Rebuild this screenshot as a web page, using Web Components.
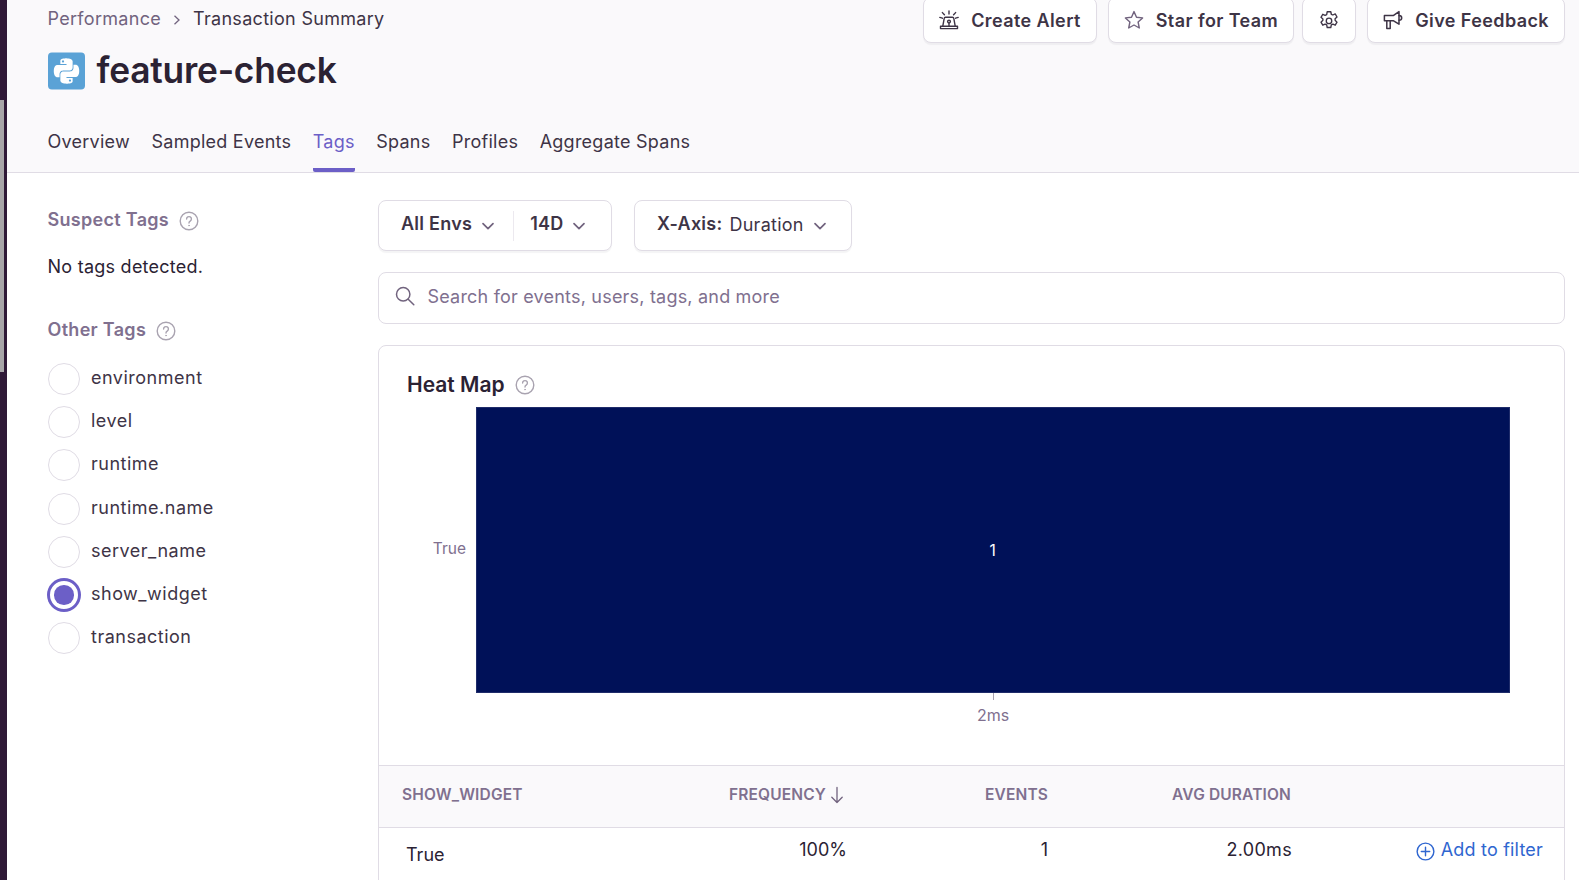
<!DOCTYPE html>
<html><head><meta charset="utf-8"><title>feature-check</title>
<style>
html,body{margin:0;padding:0;height:880px;overflow:hidden;background:#fff;font-family:Inter,"Liberation Sans",sans-serif;color:#2b2233}
</style></head><body>
<app-shell>
  <page-header slot="header"></page-header>
  <tag-sidebar slot="side"></tag-sidebar>
  <tag-main slot="main"></tag-main>
</app-shell>
<script>
const I={
 help:'<svg viewBox="0 0 20 20" fill="none" stroke="#a9a3b0" stroke-width="1.4" stroke-linecap="round"><circle cx="10" cy="10" r="8.8"/><path d="M7.6 8a2.4 2.4 0 1 1 3.6 2.1c-.8.5-1.2.9-1.2 1.9"/><circle cx="10" cy="14.6" r=".5" fill="#a9a3b0" stroke-width=".6"/></svg>',
 chev:'<svg viewBox="0 0 14 14" fill="none" stroke="#71637e" stroke-width="1.7" stroke-linecap="round" stroke-linejoin="round"><path d="M2 4.6 7 9.6 12 4.6"/></svg>',
 siren:'<svg viewBox="0 0 20 20" fill="none" stroke="#3e3446" stroke-width="1.4" stroke-linecap="round" stroke-linejoin="round"><path d="M1.5 18.6h17v-2.400h-17z"/><path d="M3.800 16.200 5.200 8.400a1.400 1.400 0 0 1 1.400-1.200h6.800a1.400 1.400 0 0 1 1.400 1.200l1.400 7.800"/><circle cx="10" cy="11.600" r="1.400"/><path d="M10 13v3M10 1v3M3.400 2.600l2 2.200M16.600 2.600l-2 2.200M.8 7.400l2.600.8M19.200 7.400l-2.600.8"/></svg>',
 star:'<svg viewBox="0 0 20 20" fill="none" stroke="#71637e" stroke-width="1.4" stroke-linejoin="round"><path d="M10 1.600l2.500 5.600 6.100.7-4.500 4.100 1.200 6-5.300-3-5.300 3 1.200-6L1.400 7.900l6.100-.7z"/></svg>',
 gear:'<svg viewBox="1.500 .5 17 19" fill="none" stroke="#3e3446" stroke-width="1.300" stroke-linejoin="round"><path d="M8.300 1.200h3.400l.5 2.400 1.500.7 2.200-1 1.700 2.900-1.800 1.600v1.600l1.800 1.700-1.700 2.900-2.200-1-1.500.7-.5 2.500H8.300l-.5-2.500-1.500-.7-2.200 1-1.700-2.900 1.800-1.700V8.100L2.400 6.500l1.700-2.900 2.200 1 1.500-.7z"/><circle cx="10" cy="9.900" r="2.600"/></svg>',
 mega:'<svg viewBox="0 0 20 20" fill="none" stroke="#3e3446" stroke-width="1.5" stroke-linejoin="round" stroke-linecap="round"><path d="M1.400 5.400h9.200L16 1.600v12.600l-5.400-3.400H1.400z"/><path d="M3.800 10.800v7.600h3.400v-7.600M16 5.600c1.600 0 2.700 1 2.700 2.300S17.600 10.200 16 10.200"/></svg>',
 search:'<svg viewBox="0 0 20 20" fill="none" stroke="#71637e" stroke-width="1.5" stroke-linecap="round"><circle cx="8.200" cy="8.200" r="6.700"/><path d="M13.200 13.200 18.800 18.800"/></svg>',
 plus:'<svg viewBox="0 0 20 20" fill="none" stroke="#2f66d0" stroke-width="1.500" stroke-linecap="round"><circle cx="10" cy="10" r="8.800"/><path d="M10 5.600v8.800M5.600 10h8.800"/></svg>',
 down:'<svg viewBox="0 0 14 18" fill="none" stroke="#71637e" stroke-width="1.300" stroke-linecap="round" stroke-linejoin="round"><path d="M7 1.500v15M1.800 11.300 7 16.500l5.200-5.200"/></svg>',
 py:'<svg viewBox="0 0 38 38"><rect width="38" height="38" rx="4" fill="#5aa2d6"/><g transform="translate(6 6) scale(1.083)"><path fill="#fff" d="M14.250.18l.9.2.73.26.59.3.45.32.34.34.25.34.16.33.1.3.04.26.02.2-.01.13V8.500l-.05.63-.13.55-.21.46-.26.38-.3.31-.33.25-.35.19-.35.14-.33.1-.3.07-.26.04-.21.02H8.770l-.69.05-.59.14-.5.22-.41.27-.33.32-.27.35-.2.36-.15.37-.1.35-.07.32-.04.27-.02.21v3.060H3.170l-.21-.03-.28-.07-.32-.12-.35-.18-.36-.26-.36-.36-.35-.46-.32-.59-.28-.73-.21-.88-.14-1.050-.05-1.230.06-1.220.16-1.040.24-.87.32-.71.36-.57.4-.44.42-.33.42-.24.4-.16.36-.1.32-.05.24-.01h.16l.06.01h8.160v-.83H6.180l-.01-2.750-.02-.37.05-.34.11-.31.17-.28.25-.26.31-.23.38-.2.44-.18.51-.15.58-.12.64-.1.71-.06.77-.04.84-.02 1.270.05zm-6.300 1.980l-.23.33-.08.41.08.41.23.34.33.22.41.09.41-.09.33-.22.23-.34.08-.41-.08-.41-.23-.33-.33-.22-.41-.09-.41.09zm13.090 3.950l.28.06.32.12.35.18.36.27.36.35.35.47.32.59.28.73.21.88.14 1.040.05 1.230-.06 1.230-.16 1.040-.24.86-.32.71-.36.57-.4.45-.42.33-.42.24-.4.16-.36.09-.32.05-.24.02-.16-.01h-8.220v.82h5.840l.01 2.760.02.36-.05.34-.11.31-.17.29-.25.25-.31.24-.38.2-.44.17-.51.15-.58.13-.64.09-.71.07-.77.04-.84.01-1.270-.04-1.070-.14-.9-.2-.73-.25-.59-.3-.45-.33-.34-.34-.25-.34-.16-.33-.1-.3-.04-.25-.02-.2.01-.13v-5.340l.05-.64.13-.54.21-.46.26-.38.3-.32.33-.24.35-.2.35-.14.33-.1.3-.06.26-.04.21-.02.13-.01h5.840l.69-.05.59-.14.5-.21.41-.28.33-.32.27-.35.2-.36.15-.36.1-.35.07-.32.04-.28.02-.21V6.070h2.090l.14.01zm-6.470 14.250l-.23.33-.08.41.08.41.23.33.33.23.41.08.41-.08.33-.23.23-.33.08-.41-.08-.41-.23-.33-.33-.23-.41-.08-.41.08z"/></g></svg>'
};
function def(name,html){
  customElements.define(name,class extends HTMLElement{
    constructor(){super();this.attachShadow({mode:'open'});}
    connectedCallback(){this.shadowRoot.innerHTML=typeof html==='function'?html(this):html;}
  });
}
const BTN=`display:inline-flex;align-items:center;background:#fff;border:1px solid #e0dce5;border-radius:8px;box-shadow:0 2px 1px rgba(43,34,51,.05);box-sizing:border-box`;

def('ui-button',el=>`<style>:host{${BTN};height:46px;padding:0 15px;gap:12px;font-size:18px;font-weight:600;color:#3e3446;letter-spacing:.4px;white-space:nowrap}
:host([icon=gear]){padding:0 16px}
svg{width:20px;height:20px;display:block;flex:none}
:host([icon=gear]) svg{margin-top:2px}</style>${I[el.getAttribute('icon')]}<slot></slot>`);
def('help-icon',`<style>:host{display:inline-block;width:20px;height:20px}svg{width:100%;height:100%;display:block}</style>${I.help}`);
def('page-header',`<style>
:host{display:block;background:#faf9fb;border-bottom:1px solid #e0dce5;height:173px;box-sizing:border-box;padding-left:40.500px;padding-right:14px}
.top{display:flex;justify-content:space-between;align-items:flex-start;height:100px}
.bc{display:flex;align-items:center;gap:11px;font-size:18px;letter-spacing:.3px;color:#3e3446;margin-top:6px;line-height:26px;white-space:nowrap}
.bc .p{color:#71637e}
.bc svg{width:10px;height:10px;margin-top:2px}
h1{display:flex;align-items:center;gap:12px;margin:20px 0 0;font-size:35.300px;font-weight:600;line-height:38px;color:#2b2233;letter-spacing:-.2px}
h1 svg{width:37px;height:38px;display:block}
.acts{display:flex;gap:11px;margin-top:-3px}
.acts ui-button:nth-child(2){margin-right:-3px}
nav{display:flex;gap:21.500px;font-size:18px;letter-spacing:.25px;color:#3e3446;margin-top:18px}
nav a{display:block;height:54px;box-sizing:border-box;padding-top:11px;line-height:26px;white-space:nowrap}
nav a.on{color:#6c5fc7;border-bottom:4px solid #6c5fc7;border-radius:0 0 2px 2px}
</style>
<div class="top"><div>
<div class="bc"><span class="p">Performance</span><svg viewBox="0 0 10 10" fill="none" stroke="#71637e" stroke-width="1.300"><path d="M2.500 .8 7 5 2.500 9.200"/></svg><span>Transaction Summary</span></div>
<h1>${I.py}<span>feature-check</span></h1>
</div>
<div class="acts"><ui-button icon="siren">Create Alert</ui-button><ui-button icon="star">Star for Team</ui-button><ui-button icon="gear"></ui-button><ui-button icon="mega">Give Feedback</ui-button></div></div>
<nav><a>Overview</a><a>Sampled Events</a><a class="on">Tags</a><a>Spans</a><a>Profiles</a><a>Aggregate Spans</a></nav>`);
def('tag-radio',`<style>:host{display:flex;align-items:center;gap:11px;height:43.200px;font-size:18px;letter-spacing:.5px;color:#3e3446}
.r{width:32px;height:32px;border:1px solid #e0dce5;border-radius:50%;box-sizing:border-box;background:#fff;display:flex;align-items:center;justify-content:center;flex:none}
:host([on]) .r{border:2px solid #6c5fc7;box-shadow:0 0 0 1px #6c5fc7}
:host([on]) .r:after{content:"";width:19.500px;height:19.500px;background:#6c5fc7;border-radius:50%}
span{margin-top:-3px}</style><div class="r"></div><span><slot></slot></span>`);
def('tag-sidebar',`<style>:host{display:block;width:330px;padding:35px 0 0 40.500px;box-sizing:border-box}
h4{display:flex;align-items:center;gap:10px;margin:0;font-size:18px;font-weight:600;letter-spacing:.3px;color:#80708f;line-height:24px}
h4 help-icon{margin-top:2px}
p{margin:23px 0 39px;font-size:18px;letter-spacing:.25px;line-height:24px;color:#2b2233}
.list{margin-top:15.500px;margin-left:.5px}
</style><h4>Suspect Tags <help-icon></help-icon></h4><p>No tags detected.</p><h4>Other Tags <help-icon></help-icon></h4>
<div class="list"><tag-radio>environment</tag-radio><tag-radio>level</tag-radio><tag-radio>runtime</tag-radio><tag-radio>runtime.name</tag-radio><tag-radio>server_name</tag-radio><tag-radio on>show_widget</tag-radio><tag-radio>transaction</tag-radio></div>`);
def('filter-bar',`<style>:host{display:flex;gap:22px}
.b{${BTN};height:51px;font-size:18px;font-weight:600;letter-spacing:.25px;color:#3e3446;white-space:nowrap}
.b span{display:flex;align-items:center;gap:9px;padding:0 22px 4px;height:30px;box-sizing:border-box}
.b span+span{border-left:1px solid #ece9ef;padding:0 22px 4px 16px}
.b i{font-style:normal;font-weight:400;margin:2px 0 0 -2px}
svg{width:14px;height:14px;margin-top:5px;flex:none}</style>
<div class="b" style="width:234px"><span style="padding-right:18px">All Envs ${I.chev}</span><span>14D ${I.chev}</span></div>
<div class="b" style="width:218px"><span>X-Axis: <i>Duration</i> ${I.chev}</span></div>`);
def('search-bar',`<style>:host{display:flex;align-items:center;gap:13px;height:52px;box-sizing:border-box;border:1px solid #e0dce5;border-radius:8px;padding:0 0 4px 15.500px;margin-top:21px;font-size:18px;letter-spacing:.2px;color:#80708f;background:#fff}
svg{width:20px;height:20px;display:block}</style>${I.search}<span>Search for events, users, tags, and more</span>`);
def('heat-map',`<style>:host{display:block;height:362px}
h3{display:flex;align-items:center;gap:10px;margin:0;padding:18px 0 0 28px;font-size:21px;line-height:30px;font-weight:600;color:#2b2233;height:60.500px;box-sizing:border-box}
.row{display:flex;align-items:center;height:286px;margin-left:53px}
.y{width:34px;text-align:right;margin-right:10px;font-size:15.500px;color:#80708f;margin-top:-3px}
.cell{width:1033.500px;height:286px;box-sizing:border-box;padding-top:2px;background:#001158;box-shadow:inset 0 0 0 1px #1f2c6a;display:flex;align-items:center;justify-content:center;color:#fff;font-size:15.500px}
.tick{width:1px;height:7px;background:#a9a3b0;margin-left:613.500px}
.x{width:40px;margin-left:594px;text-align:center;font-size:16px;color:#80708f;margin-top:5px}
</style><h3>Heat Map <help-icon></help-icon></h3>
<div class="row"><div class="y">True</div><div class="cell">1</div></div><div class="tick"></div><div class="x">2ms</div>`);
def('tag-table',`<style>:host{display:block}
.g{display:grid;grid-template-columns:292px 176px 204px 243px 1fr;align-items:start}
.h{background:#faf9fb;height:63px;border-top:1px solid #e0dce5;border-bottom:1px solid #e0dce5;box-sizing:border-box;align-items:center;padding-bottom:4px;font-size:15.500px;font-weight:600;color:#80708f;letter-spacing:.15px}
.h div{padding-right:3px;display:flex;justify-content:flex-end;align-items:center;gap:4px}
.h div:first-child{justify-content:flex-start;padding-left:23px}
.h svg{width:14px;height:18px;margin-top:1px}
.r{font-size:18px;color:#2b2233;padding-top:10px}
.r div{text-align:right;padding-right:3px;line-height:24px}
.r div:first-child{text-align:left;padding-left:27px;padding-top:5px}
.r div:nth-child(2){padding-right:0}
.r div:nth-child(4){padding-right:2px;letter-spacing:.3px}
.r .add{color:#2f66d0;display:flex;justify-content:flex-end;align-items:center;gap:6px;padding-right:21px;letter-spacing:.2px}
.add svg{width:19px;height:19px;margin-top:2px}
</style>
<div class="g h"><div>SHOW_WIDGET</div><div>FREQUENCY ${I.down}</div><div>EVENTS</div><div>AVG DURATION</div><div></div></div>
<div class="g r"><div>True</div><div>100%</div><div>1</div><div>2.00ms</div><div class="add">${I.plus}<span>Add to filter</span></div></div>`);
def('tag-card',`<style>:host{display:block;border:1px solid #e0dce5;border-radius:8px 8px 0 0;margin-top:21px;background:#fff;height:540px;box-sizing:border-box;overflow:hidden}
tag-table{margin-top:57px}</style><heat-map></heat-map><tag-table></tag-table>`);
def('tag-main',`<style>:host{display:block;flex:1;min-width:0;padding:27px 14px 0 0;box-sizing:border-box;margin-left:41px}</style><filter-bar></filter-bar><search-bar></search-bar><tag-card></tag-card>`);
def('app-shell',`<style>:host{display:flex;height:880px;overflow:hidden}
.strip{width:7px;flex:none;background:#2f1937}
.thumb{width:4px;height:272px;margin-top:100px;background:#a8a6a8}
.wrap{flex:1;min-width:0;display:flex;flex-direction:column}
.body{display:flex;flex:1;min-height:0}
</style><div class="strip"><div class="thumb"></div></div><div class="wrap"><slot name="header"></slot><div class="body"><slot name="side"></slot><slot name="main"></slot></div></div>`);
</script>
</body></html>
